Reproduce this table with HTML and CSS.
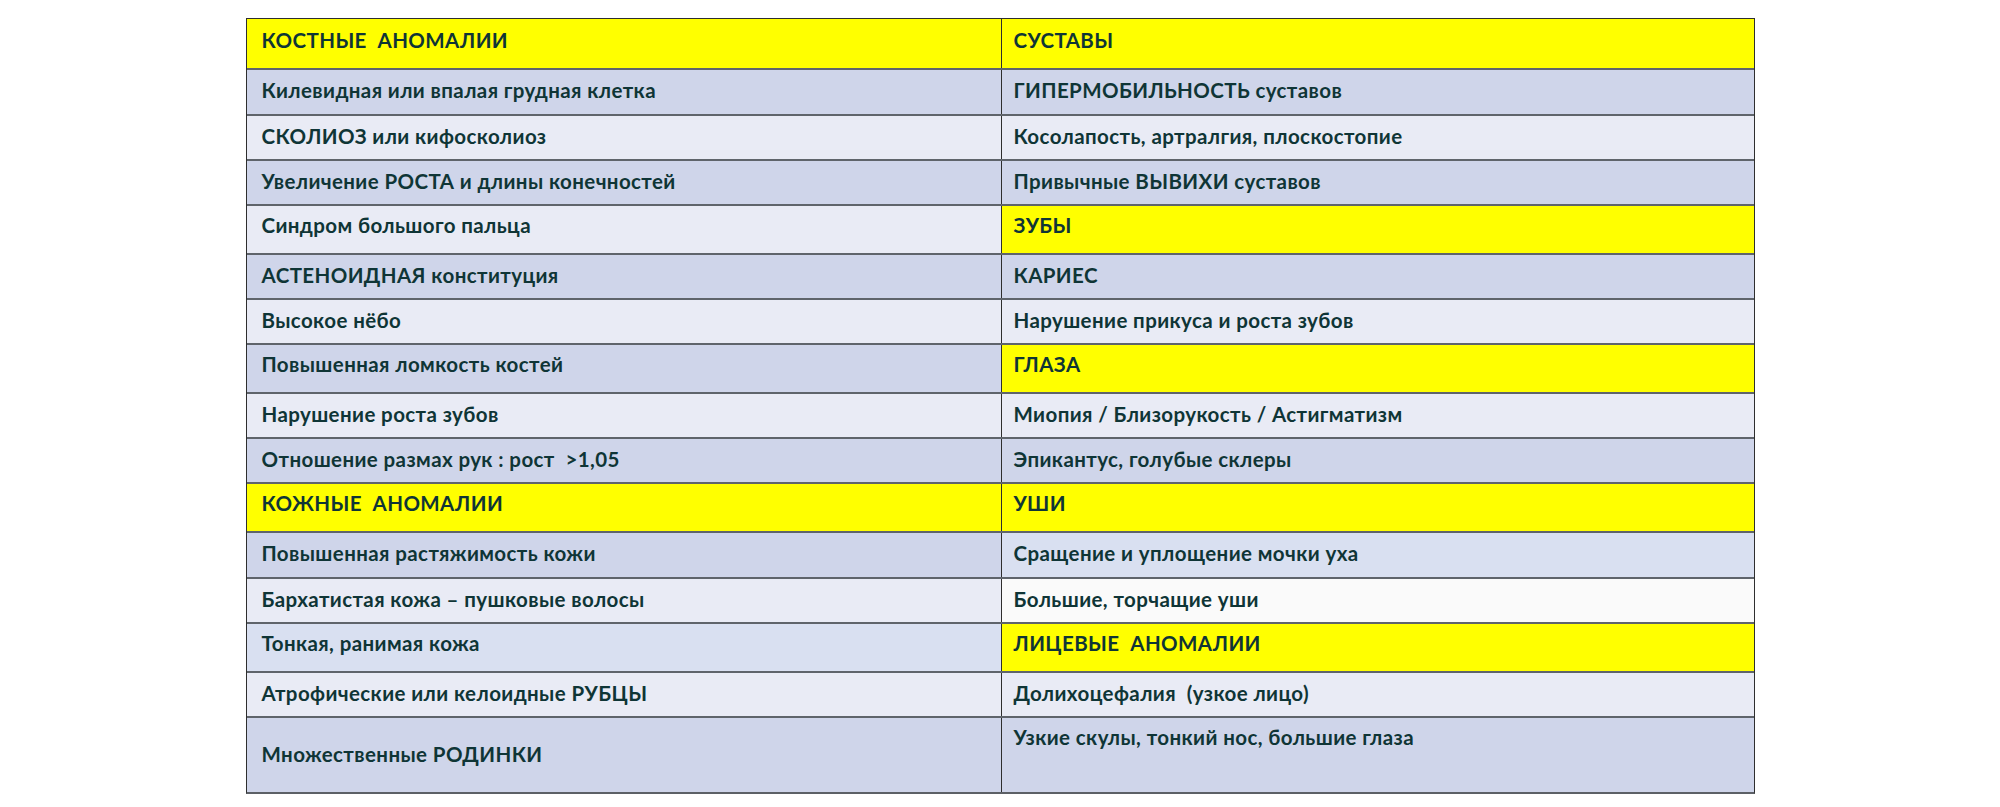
FILE: index.html
```html
<!DOCTYPE html>
<html lang="ru">
<head>
<meta charset="utf-8">
<title>Аномалии</title>
<link rel="stylesheet" href="styles.css">
</head>
<body>
<div class="sheet">
  <div class="row tall">
    <div class="cell yellow">КОСТНЫЕ&nbsp; АНОМАЛИИ</div>
    <div class="cell yellow">СУСТАВЫ</div>
  </div>
  <div class="row r46">
    <div class="cell blue">Килевидная или впалая грудная клетка</div>
    <div class="cell blue">ГИПЕРМОБИЛЬНОСТЬ суставов</div>
  </div>
  <div class="row">
    <div class="cell light">СКОЛИОЗ или кифосколиоз</div>
    <div class="cell light">Косолапость, артралгия, плоскостопие</div>
  </div>
  <div class="row">
    <div class="cell blue">Увеличение РОСТА и длины конечностей</div>
    <div class="cell blue">Привычные ВЫВИХИ суставов</div>
  </div>
  <div class="row tall">
    <div class="cell light">Синдром большого пальца</div>
    <div class="cell yellow">ЗУБЫ</div>
  </div>
  <div class="row">
    <div class="cell blue">АСТЕНОИДНАЯ конституция</div>
    <div class="cell blue">КАРИЕС</div>
  </div>
  <div class="row">
    <div class="cell light">Высокое нёбо</div>
    <div class="cell light">Нарушение прикуса и роста зубов</div>
  </div>
  <div class="row tall">
    <div class="cell blue">Повышенная ломкость костей</div>
    <div class="cell yellow">ГЛАЗА</div>
  </div>
  <div class="row">
    <div class="cell light">Нарушение роста зубов</div>
    <div class="cell light">Миопия / Близорукость / Астигматизм</div>
  </div>
  <div class="row">
    <div class="cell blue">Отношение размах рук : рост&nbsp; &gt;1,05</div>
    <div class="cell blue">Эпикантус, голубые склеры</div>
  </div>
  <div class="row tall">
    <div class="cell yellow">КОЖНЫЕ&nbsp; АНОМАЛИИ</div>
    <div class="cell yellow">УШИ</div>
  </div>
  <div class="row r46">
    <div class="cell blue">Повышенная растяжимость кожи</div>
    <div class="cell sky">Сращение и уплощение мочки уха</div>
  </div>
  <div class="row">
    <div class="cell light">Бархатистая кожа – пушковые волосы</div>
    <div class="cell white">Большие, торчащие уши</div>
  </div>
  <div class="row tall">
    <div class="cell sky">Тонкая, ранимая кожа</div>
    <div class="cell yellow">ЛИЦЕВЫЕ&nbsp; АНОМАЛИИ</div>
  </div>
  <div class="row">
    <div class="cell light">Атрофические или келоидные РУБЦЫ</div>
    <div class="cell light">Долихоцефалия&nbsp; (узкое лицо)</div>
  </div>
  <div class="row last">
    <div class="cell blue">Множественные РОДИНКИ</div>
    <div class="cell blue top">Узкие скулы, тонкий нос, большие глаза</div>
  </div>
</div>
</body>
</html>
```

FILE: styles.css
```css
html, body {
  margin: 0;
  padding: 0;
  background: #ffffff;
}

body {
  font-family: "Lato", "Open Sans", sans-serif;
  font-weight: 700;
  font-size: 20.5px;
  letter-spacing: 0.4px;
  color: #0f3536;
}

.sheet {
  width: 1509px;
  margin: 18px auto 0;
  border: 1px solid #2e2e2e;
  border-bottom: 2px solid #5c6066;
  box-sizing: border-box;
}

.row {
  display: grid;
  grid-template-columns: 754px 1fr;
  height: 45px;
  box-sizing: border-box;
  border-top: 2px solid #5f646b;
}

.row:first-child {
  border-top: none;
  height: 48px;
}

.row.tall { height: 49px; }
.row.r46 { height: 46px; }
.row.last { height: 76px; }

.cell {
  display: flex;
  align-items: center;
  padding-left: 15px;
  padding-bottom: 4px;
  white-space: nowrap;
}

.row.tall .cell {
  padding-bottom: 10px;
}

.row.tall:first-child .cell {
  padding-bottom: 8px;
}

.row.last .cell {
  padding-bottom: 2px;
}

.cell + .cell {
  border-left: 1px solid #2e2e2e;
  padding-left: 12px;
}

.row.last .cell.top {
  align-items: flex-start;
  padding-top: 7px;
}

.yellow { background: #ffff00; }
.blue { background: #cfd5ea; }
.light { background: #e9ebf5; }
.sky { background: #d9e0f1; }
.white { background: #fafafa; }
```
